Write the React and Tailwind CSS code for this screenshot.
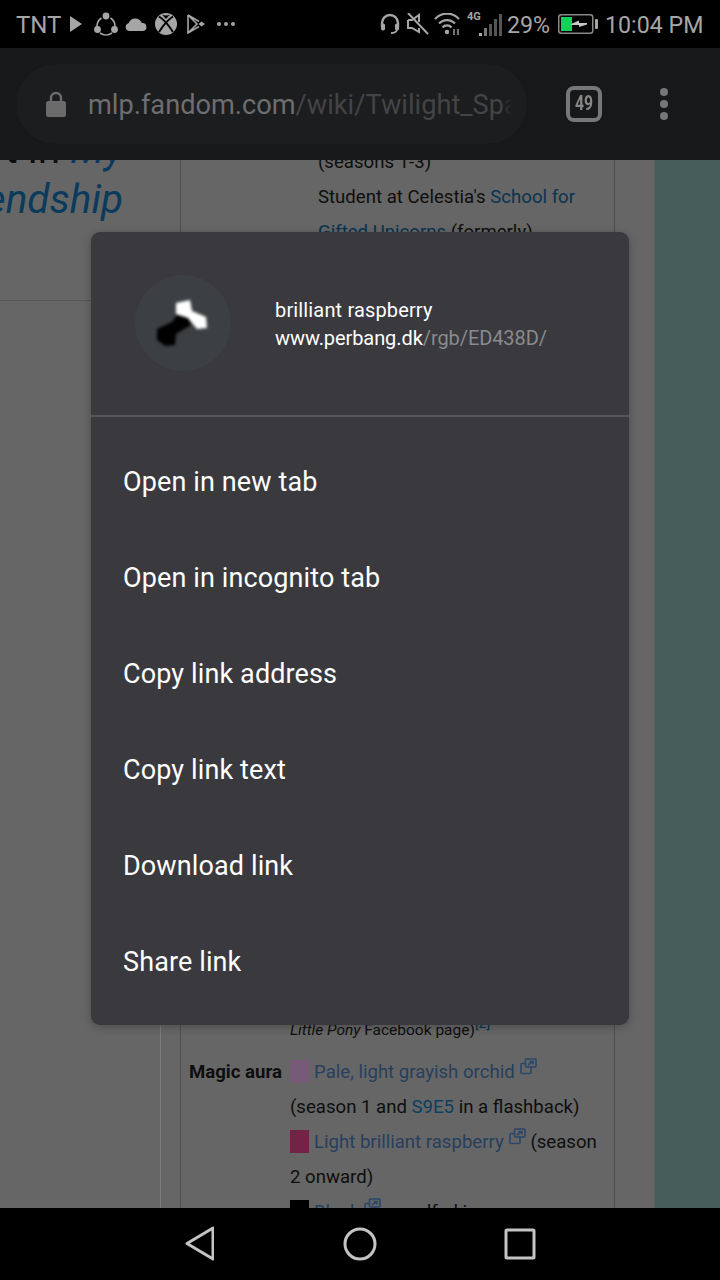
import React from "react";

const S = "#a6a6a6";

function Ext() {
  return (
    <svg width="17" height="17" viewBox="0 0 17 17" className="inline-block align-[3px] ml-[5px]" fill="none" stroke="#2a4769" strokeWidth="1.6">
      <rect x="1" y="5.5" width="10" height="10" rx="1" />
      <rect x="5.5" y="1" width="10.5" height="8" rx="1" fill="#666666" />
      <path d="M8 7 L12 4 M9.5 3.5 H13 V6.5" />
    </svg>
  );
}

function Swatch({ c }) {
  return <span className="inline-block w-[19px] h-[23px] align-[-5px] mr-[5px]" style={{ backgroundColor: c }} />;
}

function Row({ children }) {
  return <div className="h-[35px] leading-[35px] whitespace-nowrap">{children}</div>;
}

const menu = ["Open in new tab", "Open in incognito tab", "Copy link address", "Copy link text", "Download link", "Share link"];

export default function App() {
  return (
    <div className="relative w-[720px] h-[1280px] flex flex-col overflow-hidden bg-[#666666] font-['Roboto',sans-serif]">
      {/* status bar */}
      <div className="h-12 shrink-0 bg-black flex items-center text-[23.2px] text-[#a6a6a6] pl-4">
        <span className="text-[24px] w-[45px] pt-[2px]">TNT</span>
        <svg width="12" height="16" viewBox="0 0 12 16" className="ml-[9px]"><path d="M0 0 L12 8 L0 16 Z" fill={S} /></svg>
        <svg width="24" height="24" viewBox="0 0 24 24" className="ml-3" fill="none">
          <path d="M7.5 6 A10 10 0 0 0 3 15 M6 21 A10 10 0 0 0 18 21 M16.5 6 A10 10 0 0 1 21 15" stroke={S} strokeWidth="1.6" />
          <circle cx="12" cy="4" r="3.4" fill={S} />
          <circle cx="3.5" cy="17.5" r="3.4" fill={S} />
          <circle cx="20.5" cy="17.5" r="3.4" fill={S} />
        </svg>
        <svg width="22" height="13" viewBox="0 0 22 13" className="ml-[7px]"><path d="M4 13 A4 4 0 0 1 3.6 5.2 A7 7 0 0 1 16.8 5 A4 4 0 0 1 18 13 Z" fill={S} /></svg>
        <svg width="22" height="22" viewBox="0 0 22 22" className="ml-2">
          <circle cx="11" cy="11" r="11" fill={S} />
          <path d="M4 3.5 C8 6 13 11 18 19 M18 3.5 C14 6 9 11 4 19" fill="none" stroke="#000" strokeWidth="2" />
          <path d="M7 1.5 Q11 3.5 15 1.5 L11 6 Z" fill="#000" />
        </svg>
        <svg width="18" height="20" viewBox="0 0 18 20" className="ml-[10px]" fill="none" stroke={S} strokeWidth="1.6">
          <path d="M1 1 V19 L12 12.5 M1 1 L12 7.5 M1 1 L10 10 L1 19" />
          <path d="M11.5 10 L14.5 7.5 L18 10 L14.5 12.5 Z" fill={S} stroke="none" />
        </svg>
        <svg width="18" height="4" viewBox="0 0 18 4" className="ml-3"><circle cx="2" cy="2" r="2" fill={S} /><circle cx="9" cy="2" r="2" fill={S} /><circle cx="16" cy="2" r="2" fill={S} /></svg>

        <svg width="20" height="22" viewBox="0 0 20 22" className="ml-[145px]" fill="none" stroke={S} strokeWidth="2.4">
          <path d="M2 14 V10 A8 8 0 0 1 18 10 V14" />
          <rect x="1.5" y="11" width="3" height="6" rx="1" fill={S} strokeWidth="1" />
          <rect x="15.5" y="11" width="3" height="6" rx="1" fill={S} strokeWidth="1" />
          <path d="M17 17 Q16 20 11 20" strokeWidth="1.8" />
        </svg>
        <svg width="22" height="22" viewBox="0 0 22 22" className="ml-[7px]" fill="none" stroke={S} strokeWidth="2">
          <path d="M1 7 H5 L12 2 V9 M12 15 V19 L5 15 H1 V7" />
          <path d="M1 0 L21 21" />
        </svg>
        <svg width="27" height="22" viewBox="0 0 27 22" className="ml-[5px]" fill="none" stroke={S} strokeWidth="2.2">
          <path d="M1 6 A16 16 0 0 1 25 6 M5 10.5 A11 11 0 0 1 21 10.5 M8.5 14.5 A6 6 0 0 1 17.5 14.5" />
          <circle cx="13" cy="19" r="2.2" fill={S} stroke="none" />
          <path d="M20 16 V22 M24 16 V22" strokeWidth="1.4" />
        </svg>
        <div className="relative w-[35px] h-[26px] ml-[6px]">
          <span className="absolute left-0 top-0 text-[11px] leading-[11px] font-bold text-[#a6a6a6]">4G</span>
          <svg width="23" height="22" viewBox="0 0 23 22" className="absolute right-0 top-[3px]">
            <rect x="0" y="19" width="3" height="3" fill={S} />
            <rect x="5" y="14" width="3" height="8" fill="#777" />
            <rect x="10" y="10" width="3" height="12" fill="#555" />
            <rect x="15" y="5" width="3" height="17" fill="#555" />
            <rect x="20" y="0" width="3" height="22" fill="#555" />
          </svg>
        </div>
        <span className="ml-[5px] pt-[2px]">29%</span>
        <svg width="40" height="20" viewBox="0 0 40 20" className="ml-2">
          <rect x="0.75" y="0.75" width="34" height="18.5" rx="2.5" fill="none" stroke="#888" strokeWidth="1.5" />
          <rect x="3" y="3" width="11" height="14" fill="#0fd35a" />
          <path d="M13 10 L21 6.5 V9 H29 V10.5 L21 13 V11 H13 Z" fill="#c8c8c8" />
          <rect x="37" y="5" width="3" height="10" rx="1" fill={S} />
        </svg>
        <span className="ml-[7px] pt-[2px]">10:04 PM</span>
      </div>

      {/* toolbar */}
      <div className="h-28 shrink-0 bg-[#17181a] flex items-center pl-4">
        <div className="w-[511px] h-20 rounded-full bg-[#1c1d1f] flex items-center pl-[30px]">
          <svg width="20" height="26" viewBox="0 0 20 26">
            <path d="M5 11 V7 A5 5 0 0 1 15 7 V11" fill="none" stroke="#6b6b6b" strokeWidth="2.4" />
            <rect x="0" y="10" width="20" height="16" rx="2.5" fill="#6b6b6b" />
          </svg>
          <div className="relative ml-[22px] w-[424px] overflow-hidden whitespace-nowrap text-[27.2px] pt-[2px] text-[#434445]">
            <span className="text-[#6d6e6f]">mlp.fandom.com</span>/wiki/Twilight_Sparkle
            <span className="absolute right-0 top-0 h-full w-3 bg-gradient-to-r from-transparent to-[#1c1d1f]" />
          </div>
        </div>
        <div className="w-[36px] h-[36px] ml-[39px] rounded-[8px] border-[4px] border-[#777777] flex items-center justify-center text-[21px] font-bold text-[#888888]"><span className="scale-x-[0.75]">49</span></div>
        <div className="ml-[58px] flex flex-col gap-1">
          <span className="w-2 h-2 rounded-full bg-[#777777]" />
          <span className="w-2 h-2 rounded-full bg-[#777777]" />
          <span className="w-2 h-2 rounded-full bg-[#777777]" />
        </div>
      </div>

      {/* dimmed page */}
      <div className="flex-1 min-h-0 flex overflow-hidden text-[18.6px] text-[#0e0e0e]">
        <div className="w-[180px] shrink-0 flex flex-col">
          <div className="h-[141px] shrink-0 border-b border-[#565656] overflow-hidden">
            <div className="w-[123px] flex flex-col items-end whitespace-nowrap text-[40.5px] leading-[50px] -mt-[36px]">
              <div>ot in <i className="text-[#0a3a5c]">My</i></div>
              <i className="text-[#0a3a5c]">Friendship</i>
            </div>
          </div>
          <div className="flex-1 ml-[160px] border-l border-[#7a7a7a]" />
        </div>

        <div className="w-[435px] shrink-0 border-x border-[#4f4f4f] flex flex-col justify-between overflow-hidden">
          <div className="pl-[137px] -mt-[15px]">
            <Row>(seasons 1-3)</Row>
            <Row>Student at Celestia's <span className="text-[#0a3350]">School for</span></Row>
            <Row><span className="text-[#0a3350]">Gifted Unicorns</span> (formerly)</Row>
          </div>
          <div className="pl-[8px] -mb-[22px]">
            <div className="pl-[101px] h-[26px] text-[15.5px] leading-[2px] whitespace-nowrap"><i>Little Pony</i> Facebook page)<sup className="text-[#0a3350] text-[14px]">[2]</sup></div>
            <div className="flex">
              <div className="w-[101px] shrink-0 font-bold leading-[35px]">Magic aura</div>
              <div>
                <Row><Swatch c="#775a78" /><span className="text-[#263f5e]">Pale, light grayish orchid</span><Ext /></Row>
                <Row>(season 1 and <span className="text-[#0c3f60]">S9E5</span> in a flashback)</Row>
                <Row><Swatch c="#722346" /><span className="text-[#263f5e]">Light brilliant raspberry</span><Ext /> (season</Row>
                <Row>2 onward)</Row>
                <Row><Swatch c="#000000" /><span className="text-[#263f5e]">Black</span><Ext /> engulfed in a</Row>
              </div>
            </div>
          </div>
        </div>

        <div className="w-[39px] shrink-0 bg-[#666666]" />
        <div className="flex-1 bg-[#465d5c] border-l border-[#595f5e]" />
      </div>

      {/* nav bar */}
      <div className="h-[72px] shrink-0 bg-black flex items-center justify-center gap-[128px]">
        <svg width="30" height="36" viewBox="0 0 30 36" fill="none" stroke="#c4c4c4" strokeWidth="3" strokeLinejoin="round"><path d="M29 2 V33 L3 17.5 Z" /></svg>
        <svg width="34" height="34" viewBox="0 0 34 34" className="ml-px -mr-px" fill="none" stroke="#c4c4c4" strokeWidth="3"><circle cx="17" cy="17" r="15" /></svg>
        <svg width="32" height="32" viewBox="0 0 32 32" fill="none" stroke="#c4c4c4" strokeWidth="3" strokeLinejoin="round"><rect x="2" y="2" width="28" height="28" rx="1" /></svg>
      </div>

      {/* context menu */}
      <div className="absolute left-[91px] top-[232px] w-[538px] h-[793px] rounded-[9px] bg-[#39393e] shadow-[0_2px_8px_rgba(0,0,0,0.25)]">
        <div className="h-[183px] flex items-center pl-11">
          <div className="relative w-24 h-24 rounded-full bg-[#3c4043] shrink-0 -mt-[1px]">
            <svg width="96" height="96" viewBox="135 275 96 96" className="blur-[1.6px]">
              <path d="M157 329 L172 322 L177 315 L188 318 L191 325 L176 334 L175 345 L165 346 L157 340 Z" fill="#000" />
              <path d="M176 303 L190 300 L192 311 L206 317 L207 328 L197 329 L188 318 L176 314 Z" fill="#fff" />
            </svg>
          </div>
          <div className="ml-11 text-[20px] leading-[28px] text-white whitespace-nowrap">
            <div className="tracking-[0.15px]">brilliant raspberry</div>
            <div className="tracking-[-0.08px]">www.perbang.dk<span className="text-[#8a8a8d]">/rgb/ED438D/</span></div>
          </div>
        </div>
        <div className="h-[2px] bg-[#56565a]" />
        <div className="pt-[17px]">
          {menu.map((m) => (
            <div key={m} className="h-24 flex items-center pl-8 text-[27px] tracking-[0.12px] text-white">{m}</div>
          ))}
        </div>
      </div>
    </div>
  );
}
